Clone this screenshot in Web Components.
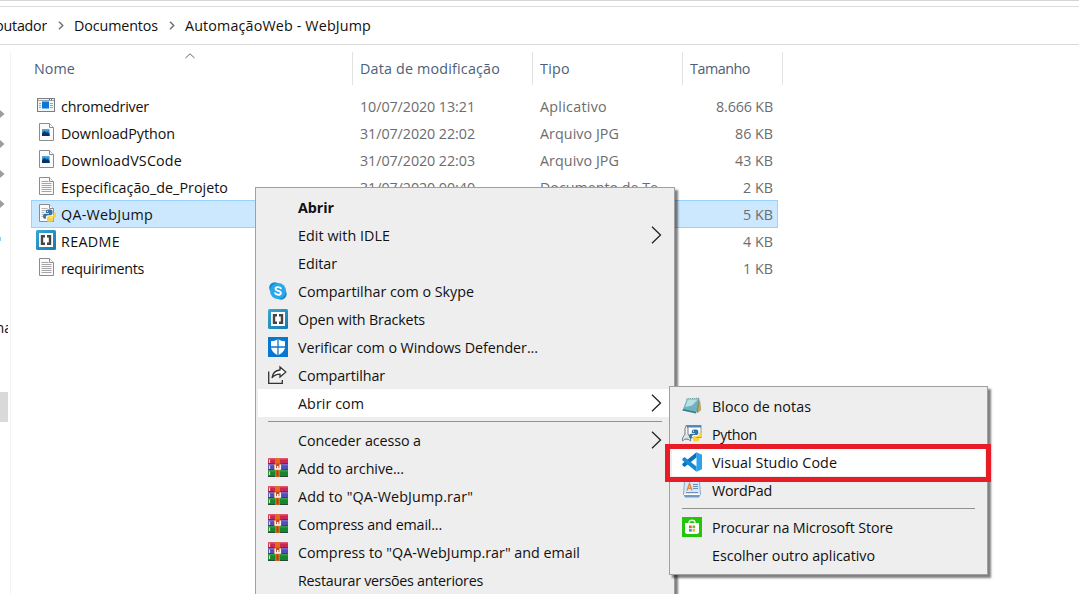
<!DOCTYPE html>
<html lang="pt-BR">
<head>
<meta charset="utf-8">
<title>AutomaçãoWeb - WebJump</title>
<style>
html,body{margin:0;height:100%;overflow:hidden;background:#fff}
body{font:14.3px/20px "Open Sans","Noto Sans",sans-serif;color:#111}
</style>
</head>
<body>
<explorer-window></explorer-window>
<script>
const define=(name,css,html,after)=>{
  const tpl=document.createElement('template');
  tpl.innerHTML=`<style>:host{box-sizing:border-box}${css}</style>${html}`;
  customElements.define(name,class extends HTMLElement{
    connectedCallback(){
      if(this.shadowRoot)return;
      this.attachShadow({mode:'open'}).append(tpl.content.cloneNode(true));
      if(after)after.call(this,this.shadowRoot);
    }
  });
};

/* Label whose tracking is adjusted so the text takes exactly `w` pixels. */
define('fit-text',':host{display:inline-block;white-space:pre;flex:none}','<span></span>',function(r){
  const s=r.querySelector('span');
  s.textContent=this.getAttribute('text');
  const w=+this.getAttribute('w');
  if(w){
    const n=s.textContent.length;
    s.style.letterSpacing=(w-s.getBoundingClientRect().width)/n+'px';
  }
});

const page='<path d="M3.5 1.5h10l4 4v13h-14z" fill="#fbfbfb" stroke="#8c8c8c"/><path d="M13.5 1.5v4h4" fill="#fff" stroke="#8c8c8c"/>';
const snake=(x,y,s)=>`<g transform="translate(${x} ${y}) scale(${s})"><path d="M5.8 0C3.6 0 3 1 3 2v1.8h3.2v.7H1.7C.6 4.5 0 5.7 0 7.200s.7 2.600 1.700 2.600h1.300V8c0-1.200 1-2 2.100-2h3C9.200 6 10 5.100 10 4V2c0-1.200-1-2-2.300-2z" transform="translate(-1 0)" fill="#3572a8"/><path d="M7.200 13c2.200 0 2.800-1 2.800-2V9.200H6.800v-.7h4.500c1.100 0 1.700-1.200 1.700-2.700s-.7-2.600-1.700-2.600H10V5c0 1.200-1 2-2.100 2h-3C3.800 7 3 7.900 3 9v2c0 1.200 1 2 2.300 2z" fill="#fad33f"/><circle cx="3.700" cy="1.800" r=".6" fill="#fff"/></g>`;
const ICONS={
  exe:'<g transform="translate(0 1)"><rect x="1.500" y="2.500" width="17" height="13" fill="#f4f4f4" stroke="#777e85"/><path d="M2 4.500h16" stroke="#9ca3a9"/><path d="M13 3.500h4" stroke="#666" stroke-dasharray="1 1"/><path d="M3 7.500h2M3 9.500h2M3 11.500h2M14 7.500h3M14 9.500h3M14 11.500h3" stroke="#9aa"/><rect x="6" y="5.500" width="7" height="7" fill="#0878d8"/></g>',
  jpg:page+'<defs><linearGradient id="a" x2="0" y2="1"><stop stop-color="#4fb3ef"/><stop offset="1" stop-color="#0b3f86"/></linearGradient></defs><rect x="6" y="7" width="7.500" height="7" fill="url(#a)"/><path d="M6 12l2.500-3 2 2 1-1 2 2v2H6z" fill="#0a3167"/>',
  txt:page+'<path d="M5.500 5.500h7M5.500 7.500h10M5.500 9.500h10M5.500 11.500h10M5.500 13.500h10M5.500 15.500h10" stroke="#a5a5a5"/>',
  py:page+'<path d="M5.500 5.500h6M5.500 7.500h6M5.500 9.500h3M5.500 11.500h2M5.500 13.500h2" stroke="#b5b5b5"/>'+snake(8,6.500,.95),
  brackets:'<defs><linearGradient id="b" x2="1" y2="1"><stop stop-color="#36a7d4"/><stop offset="1" stop-color="#1679ae"/></linearGradient></defs><rect width="20" height="20" rx="1.500" fill="url(#b)"/><rect x="3" y="3" width="14" height="14" fill="#fff"/><path d="M9 6.200H6v7.600h3M11 6.200h3v7.600h-3" fill="none" stroke="#454545" stroke-width="2.400"/>',
  skype:'<circle cx="6.800" cy="6.800" r="5.600" fill="#1684c9"/><circle cx="13" cy="13" r="5.700" fill="#1684c9"/><circle cx="10" cy="10" r="8" fill="#28a8ea"/><path d="M12.800 7.300C12 5.900 7.500 5.500 7.500 7.900c0 2.300 5.400 1.500 5.400 4 0 2.600-4.900 2.300-5.800.3" fill="none" stroke="#fff" stroke-width="1.900" stroke-linecap="round"/>',
  defender:'<rect width="20" height="20" fill="#0877d1"/><path d="M10 2c2 1.500 4.500 2.200 7 2.200v5.300c0 4-3 6.900-7 8.700-4-1.800-7-4.700-7-8.700V4.200C5.500 4.200 8 3.500 10 2z" fill="#fff"/><path d="M10 1v18M2 10h16" stroke="#0877d1" stroke-width="1.300"/>',
  share:'<path d="M.7 6.500v11.800h13.600V15" fill="none" stroke="#333" stroke-width="1.300"/><path d="M12 2l5.800 5-5.800 5V9.200c-3.500 0-6 .8-8 3.800.5-4.600 3.500-7.500 8-8z" fill="#fff" stroke="#333" stroke-width="1.300"/>',
  rar:'<rect width="20" height="6" fill="#ca264f"/><rect y="6" width="20" height="6" fill="#554cba"/><rect y="12" width="20" height="7" fill="#16862c"/><path d="M0 .8h20" stroke="#ec6e85"/><path d="M0 6.800h20" stroke="#8c87e3"/><path d="M0 12.800h20" stroke="#49ba55"/><path d="M1.500 1.500V5M1.500 7.500V11M1.500 13.500V17" stroke="#f5db8b" stroke-width="1.200"/><path d="M0 5.700h20M0 11.700h20M0 18.500h20" stroke="#322246" stroke-opacity=".6"/><rect x="7" width="5" height="19" fill="#e56b1c"/><path d="M9.500 12.500v6" stroke="#974c11" stroke-width="2"/><rect x="6" y="5.500" width="7.500" height="6.500" fill="#bd4c24"/><path d="M7.200 6.500V11h5V6.500M9.700 8v3" fill="none" stroke="#fff" stroke-width="1.500"/>',
  notepad:'<path d="M4 2.500l13-.8L19 14l-3.500 3z" fill="#7f8b78"/><path d="M15.500 16.500l2.500-13 1.200 10z" fill="#c4a661"/><path d="M5 2.500h12L14 16.500.5 14.500z" fill="#6fb3c0"/><path d="M5.800 3.500h10L10 9.500 3.200 11z" fill="#b9e0e5"/><path d="M.5 14.500L14 17.500l.3-1.600L1 13z" fill="#347c8c"/><path d="M5 2.300h12" stroke="#ddd" stroke-dasharray="1 1"/>',
  python:'<rect x="5.500" y="1.500" width="13.500" height="12" fill="#fff" stroke="#7196b5"/><path d="M5 2.500h14" stroke="#4a83be" stroke-width="2"/><path d="M3 15V4.500L4.500 1 6 4.500V15z" fill="#f3f3f3" stroke="#777"/><path d="M3 10l-2.500 4v3L3 15h3l2.500 2v-3L6 10" fill="#dce4ea" stroke="#7b8790"/>'+snake(8,5.500,.92),
  vscode:'<path d="M14.500.2L20 2.700v14.600l-5.500 2.500z" fill="#2aa3ed"/><path d="M14.500.2v5.300L2.500 15 .3 13.200v-1.500z" fill="#0873b8"/><path d="M14.500 19.800v-5.300L2.500 5 .3 6.800v1.500z" fill="#168bd4"/>',
  wordpad:'<path d="M2.500 1.500h15l1 13h-17z" fill="#d7e8f8" stroke="#8babc9"/><path d="M1.500 14.500h17l-1.500 3H3z" fill="#6e9ac4"/><path d="M2 14h16v1H2z" fill="#fff"/><path d="M5 10.500l2.500-7 2.500 7M6 8.200h3" fill="none" stroke="#e58842" stroke-width="1.400"/><path d="M11 4.500h5M11 6.500h5M11 8.500h5M4 12.500h12" stroke="#6790bb"/>',
  store:'<rect width="20" height="20" fill="#25c50b"/><path d="M7 7V5.500c0-3 6-3 6 0V7" fill="none" stroke="#d9f8d4" stroke-width="1.400"/><path d="M3 6h14v9.500l-1.500 1.500h-11L3 15.500z" fill="#fff"/><path d="M7 8.500h2.700v2.700H7z" fill="#e85532"/><path d="M10.500 8.500h2.700v2.700h-2.700z" fill="#77b52b"/><path d="M7 12h2.700v2.700H7z" fill="#26a0da"/><path d="M10.500 12h2.700v2.700h-2.700z" fill="#f4b729"/>'
};
define('ui-icon',':host{display:block;width:20px;height:20px;flex:none}svg{display:block}','<svg width="20" height="20" viewBox="0 0 20 20"></svg>',function(r){
  r.querySelector('svg').innerHTML=ICONS[this.getAttribute('name')]||'';
});

define('path-bar',`:host{display:flex;align-items:center;flex:none;height:45px;padding-top:7px;border-top:1px solid #d5d5d5;border-bottom:1px solid #d9d9d9;background:linear-gradient(#dcdcdc,#dcdcdc) 0 5px/100% 1px no-repeat}
 .first{width:47px;display:flex;justify-content:flex-end;overflow:hidden}svg{margin:-2px 10px 0 11px;flex:none}`,
 `<div class="first"><fit-text text="Computador" w="82"></fit-text></div>
 <svg width="6" height="9"><path d="M1 .8L4.700 4.500 1 8.200" fill="none" stroke="#777" stroke-width="1.600"/></svg>
 <fit-text text="Documentos" w="84"></fit-text>
 <svg width="6" height="9"><path d="M1 .8L4.700 4.500 1 8.200" fill="none" stroke="#777" stroke-width="1.600"/></svg>
 <fit-text text="AutomaçãoWeb - WebJump" w="186"></fit-text>`);

define('nav-pane',`:host{display:flex;flex-direction:column;width:11px;flex:none;margin-top:7px;border-right:1px solid #f3f3f3}
 .pins{display:grid;grid-auto-rows:30px;padding-top:47px}.pins svg{align-self:center}
 .mark{width:1px;height:4px;background:#91cdea;margin-top:18px}
 .label{width:8px;overflow:hidden;margin-top:77px}.label fit-text{margin-left:-9px}
 .thumb{width:8px;height:30px;background:#d9d9d9;margin-top:54px}`,
 `<div class="pins">${'<svg width="5" height="8"><path d="M0 0l4.500 4L0 8V5.500H-1v-3h1z" fill="#999ea2"/></svg>'.repeat(4)}</div>
 <div class="mark"></div><div class="label"><fit-text text="ma"></fit-text></div><div class="thumb"></div>`);

const FILES=[
 ['exe','chromedriver',88,'10/07/2020 13:21','Aplicativo',67,'8.666 KB',57],
 ['jpg','DownloadPython',114,'31/07/2020 22:02','Arquivo JPG',79,'86 KB',38],
 ['jpg','DownloadVSCode',121,'31/07/2020 22:03','Arquivo JPG',79,'43 KB',38],
 ['txt','Especificação_de_Projeto',167,'31/07/2020 00:40','Documento de Te',118,'2 KB',30],
 ['py','QA-WebJump',92,'','',0,'5 KB',30],
 ['brackets','README',59,'','',0,'4 KB',30],
 ['txt','requiriments',83,'','',0,'1 KB',30]
];
define('file-entry',`:host{display:block;width:747px}
 .row{display:grid;grid-template-columns:329px 180px 121px 117px;height:27px;color:#6d6d6d}
 :host([selected]){background:#cce8ff;box-shadow:inset 0 0 0 1px #99d1ff;height:28px;margin-bottom:-1px}
 .row>div{display:flex;align-items:flex-start;padding-top:5px}
 .row>.name{gap:5px;padding:3px 0 0 5px;color:#111}.name fit-text{margin-top:2px}
 .row>.size{justify-content:flex-end;padding-right:5px}`,'<div class="row"></div>',function(r){
  const [ic,n,nw,d,k,kw,s,sw]=FILES[this.getAttribute('index')];
  const t=(x,w)=>x?`<fit-text text="${x}" w="${w}"></fit-text>`:'';
  r.querySelector('.row').innerHTML=`<div class="name"><ui-icon name="${ic}"></ui-icon>${t(n,nw)}</div><div>${t(d,115)}</div><div>${t(k,kw)}</div><div class="size">${t(s,sw)}</div>`;
});

define('file-list',`:host{display:block;padding:7px 0 0 20px;flex:1}
 .head{display:grid;grid-template-columns:322px 180px 150px 100px;height:33px;color:#4c607a}
 .head>div{border-right:1px solid #e2e2e2;display:flex;align-items:center;padding-left:7px;position:relative}
 .head>div:first-child{padding-left:3px}
 .head svg{position:absolute;left:154px;top:1px}.rows{padding-top:7px}`,
 `<div class="head"><div><fit-text text="Nome" w="41"></fit-text><svg width="10" height="6"><path d="M.5 5L5 .8 9.500 5" fill="none" stroke="#666"/></svg></div><div><fit-text text="Data de modificação" w="140"></fit-text></div><div><fit-text text="Tipo" w="30"></fit-text></div><div><fit-text text="Tamanho" w="60"></fit-text></div></div>
 <div class="rows">${FILES.map((f,i)=>`<file-entry index="${i}" ${i==4?'selected':''}></file-entry>`).join('')}</div>`);

define('menu-item',`:host{display:flex;align-items:center;height:28px;padding-left:10px;margin:0 2px}
 :host([active]){background:#fff}:host([strong]){font-weight:700}
 ui-icon{margin-right:10px}fit-text{margin-top:2px}.arrow{margin:-1px 10px 0 auto;display:none}:host([more]) .arrow{display:block}`,
 '<ui-icon></ui-icon><fit-text></fit-text><svg class="arrow" width="11" height="18"><path d="M1 .8L9.500 9 1 17.200" fill="none" stroke="#222" stroke-width="1.300"/></svg>',function(r){
  const ic=document.createElement('ui-icon');ic.setAttribute('name',this.getAttribute('icon')||'');
  r.querySelector('ui-icon').replaceWith(ic);
  const t=document.createElement('fit-text');
  t.setAttribute('text',this.getAttribute('label'));t.setAttribute('w',this.getAttribute('w'));
  r.querySelector('fit-text').replaceWith(t);
});
define('menu-line',':host{display:block;height:1px;background:#919191;margin:4px 12px}','');
define('popup-menu',':host{display:block;background:#eee;border:1px solid #a0a0a0;padding-top:5px;box-shadow:3px 3px 2px rgba(0,0,0,.5)}','<slot></slot>');
define('focus-frame',':host{display:block;border:5px solid #e81c27}','');

const item=(label,w,icon='',attr='')=>`<menu-item label='${label}' w="${w}" icon="${icon}" ${attr}></menu-item>`;
define('explorer-window',`:host{display:flex;flex-direction:column;height:594px;width:1079px;position:relative;overflow:hidden;background:#fff}
 main{display:flex;flex:1}
 .menu{position:absolute;left:255px;top:187px;width:420px;height:430px}
 .sub{position:absolute;left:669px;top:386px;width:319px;height:189px}
 focus-frame{position:absolute;left:665px;top:444px;width:326px;height:38px}`,
 `<path-bar></path-bar><main><nav-pane></nav-pane><file-list></file-list></main>
 <popup-menu class="menu">${
 item('Abrir',36,'','strong')+item('Edit with IDLE',92,'','more')+item('Editar',39)+item('Compartilhar com o Skype',176,'skype')+item('Open with Brackets',127,'brackets')+item('Verificar com o Windows Defender...',240,'defender')+item('Compartilhar',87,'share')+item('Abrir com',66,'','active more')}<menu-line></menu-line>${
 item('Conceder acesso a',123,'','more')+item('Add to archive...',106,'rar')+item('Add to "QA-WebJump.rar"',175,'rar')+item('Compress and email...',144,'rar')+item('Compress to "QA-WebJump.rar" and email',282,'rar')+item('Restaurar versões anteriores',185)}</popup-menu>
 <popup-menu class="sub">${
 item('Bloco de notas',99,'notepad')+item('Python',45,'python')+item('Visual Studio Code',125,'vscode','active')+item('WordPad',60,'wordpad')}<menu-line></menu-line>${
 item('Procurar na Microsoft Store',181,'store')+item('Escolher outro aplicativo',163)}</popup-menu>
 <focus-frame></focus-frame>`);
</script>
</body>
</html>
